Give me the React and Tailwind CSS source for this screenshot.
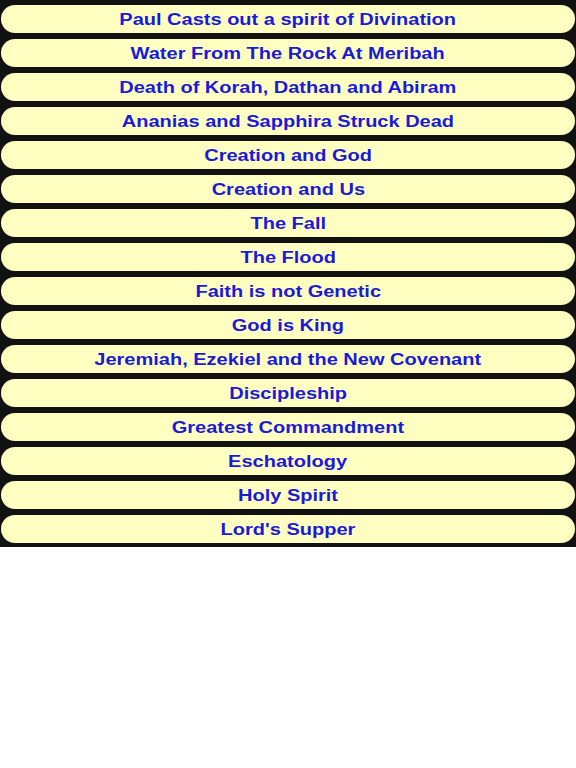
import React from 'react';

const topics = [
  'Paul Casts out a spirit of Divination',
  'Water From The Rock At Meribah',
  'Death of Korah, Dathan and Abiram',
  'Ananias and Sapphira Struck Dead',
  'Creation and God',
  'Creation and Us',
  'The Fall',
  'The Flood',
  'Faith is not Genetic',
  'God is King',
  'Jeremiah, Ezekiel and the New Covenant',
  'Discipleship',
  'Greatest Commandment',
  'Eschatology',
  'Holy Spirit',
  "Lord's Supper",
];

export default function App() {
  return (
    <div className="min-h-[768px] w-[576px] bg-white font-['Liberation_Sans',Arial,sans-serif]">
      <div className="flex flex-col gap-[6px] bg-[#111111] px-[1px] pt-[5px] pb-[4px]">
        {topics.map((t) => (
          <div
            key={t}
            className="flex h-[28px] items-center justify-center rounded-full bg-[#ffffc2] pt-[1px] text-[16px] font-bold text-[#1a1ad8]"
          >
            {/* labels are drawn a little wide, as on the original menu */}
            <span className="inline-block whitespace-nowrap scale-x-[1.25]">{t}</span>
          </div>
        ))}
      </div>
    </div>
  );
}
